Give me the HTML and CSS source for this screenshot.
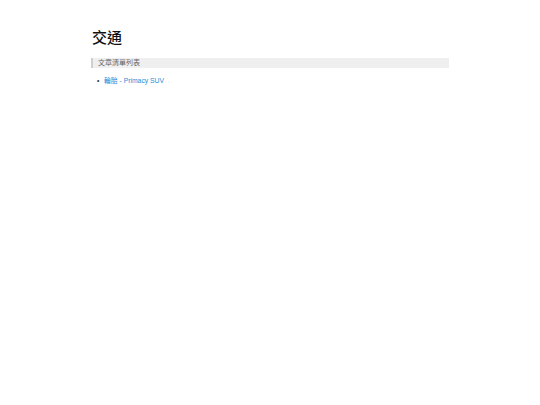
FILE: index.html
```html
<!DOCTYPE html>
<html lang="zh-Hant">
<head>
<meta charset="utf-8">
<title>交通</title>
<link rel="stylesheet" href="styles.css">
</head>
<body>
<div class="page">
  <h1 class="title">交通</h1>
  <div class="bar">文章清單列表</div>
  <ul class="list">
    <li><a href="#">輪胎 - Primacy SUV</a></li>
  </ul>
</div>
</body>
</html>
```
FILE: styles.css
```css
html, body {
  margin: 0;
  padding: 0;
  background: #fff;
}
body {
  font-family: "Liberation Sans", "Noto Sans CJK TC", sans-serif;
  color: #333;
}
.page {
  width: 358px;
  margin: 0 auto;
  padding-top: 28px;
}
.title {
  margin: 0 0 0 1px;
  font-size: 15px;
  line-height: 18px;
  font-weight: 500;
  color: #111;
  font-family: "Noto Sans CJK TC", sans-serif;
}
.bar {
  margin-top: 12px;
  height: 10px;
  line-height: 10px;
  background: #efefef;
  border-left: 2px solid #d0d0d0;
  padding-left: 5px;
  font-size: 7px;
  color: #666;
}
.list {
  margin: 8px 0 0 0;
  padding-left: 6px;
  list-style: none;
  font-size: 6.8px;
  line-height: 10px;
  color: #333;
}
.list li::before {
  content: "\2022";
  display: inline-block;
  width: 7px;
}
.list a {
  color: #1f8dd6;
  text-decoration: none;
}
```
